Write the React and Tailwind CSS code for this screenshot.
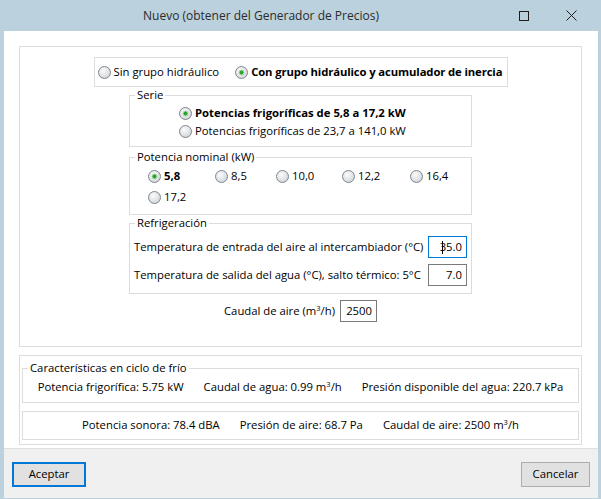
import clsx from "clsx";

/**
 * Diálogo "Nuevo (obtener del Generador de Precios)"
 * Ventana estilo Windows: barra de título, grupos con leyenda y botonera.
 */

const RadioDot = ({ checked }) => (
  <svg width="13" height="13" viewBox="0 0 13 13" className="shrink-0">
    <defs>
      <radialGradient id="rdFill" cx="40%" cy="35%" r="75%">
        <stop offset="0" stopColor="#fbfbfb" />
        <stop offset="1" stopColor="#cdd1d5" />
      </radialGradient>
    </defs>
    <circle cx="6.5" cy="6.5" r="6" fill="url(#rdFill)" stroke="#7e8790" />
    {checked && <circle cx="6.5" cy="6.5" r="2.4" fill="#2da42d" stroke="#a6dca6" strokeWidth="0.8" />}
  </svg>
);

const Radio = ({ checked, label, bold, className, labelClass }) => (
  <label className={clsx("flex items-center", className)}>
    <RadioDot checked={checked} />
    <span className={clsx("ml-[3px] whitespace-nowrap", bold && "font-bold", labelClass)}>{label}</span>
  </label>
);

// Caja de grupo con leyenda (GroupBox)
const GroupBox = ({ legend, className, children }) => (
  <fieldset className={clsx("border border-[#dcdcdc]", className)}>
    <legend className="ml-[5px] px-[2px] leading-[16px]">{legend}</legend>
    {children}
  </fieldset>
);

const NumInput = ({ value, focused, className }) => (
  <div
    className={clsx(
      "flex h-[22px] items-center justify-end border pr-[4px]",
      focused ? "border-[#0078d7]" : "border-[#7a7a7a]",
      className
    )}
  >
    {focused && <span className="-mr-[3px] h-[13px] w-px bg-black" />}
    {value}
  </div>
);

const Sup3 = () => <sup className="text-[7.5px]">3</sup>;

const potencias = [
  { v: "5,8", w: "w-[67px]", checked: true },
  { v: "8,5", w: "w-[61px]" },
  { v: "10,0", w: "w-[66px]" },
  { v: "12,2", w: "w-[68px]" },
  { v: "16,4", w: "w-[60px]" },
  { v: "17,2", w: "w-[67px]" },
];

export default function App() {
  return (
    <div className="flex h-[499px] w-[601px] flex-col bg-[#bcd1de] font-['Open_Sans','Noto_Sans',sans-serif] text-[11.3px] text-black">
      {/* BARRA DE TÍTULO */}
      <div className="flex h-[31px] shrink-0 items-center text-[12px] text-[#2b2b2b]">
        <span className="pl-[143px]">Nuevo (obtener del Generador de Precios)</span>
        <div className="ml-auto mr-[24px] flex items-center gap-[37px]">
          <span className="h-[10px] w-[10px] border border-[#1e1e1e]" />
          <svg width="11" height="11" viewBox="0 0 11 11">
            <path d="M0.5 0.5 L10.5 10.5 M10.5 0.5 L0.5 10.5" stroke="#1e1e1e" strokeWidth="1" />
          </svg>
        </div>
      </div>

      <div className="ml-[4px] mr-[3px] flex flex-1 flex-col">
        {/* ÁREA BLANCA */}
        <div className="flex h-[417px] flex-col bg-white px-[15px] pt-[15px]">
          {/* 1. DATOS DEL EQUIPO */}
          <div className="flex h-[301px] w-[563px] flex-col border border-[#dcdcdc]">
            <div className="mx-auto mt-[10px] flex h-[30px] w-[414px] items-center border border-[#dcdcdc] pl-[3px]">
              <Radio label="Sin grupo hidráulico" />
              <Radio
                className="ml-[16px]"
                labelClass="tracking-[-0.12px]"
                checked
                bold
                label="Con grupo hidráulico y acumulador de inercia"
              />
            </div>

            <GroupBox legend="Serie" className="mx-auto w-[343px] pb-[6px]">
              <div className="pl-[49px] pt-[1px]">
                <Radio className="h-[18px]" checked bold label="Potencias frigoríficas de 5,8 a 17,2 kW" />
                <Radio className="h-[18px]" label="Potencias frigoríficas de 23,7 a 141,0 kW" />
              </div>
            </GroupBox>

            <GroupBox legend="Potencia nominal (kW)" className="mx-auto mt-[2px] w-[343px] pb-[6px]">
              <div className="flex flex-wrap pl-[18px] pt-[1px]">
                {potencias.map((p) => (
                  <Radio key={p.v} className={clsx("h-[21px]", p.w)} checked={p.checked} bold={p.checked} label={p.v} />
                ))}
              </div>
            </GroupBox>

            <GroupBox legend="Refrigeración" className="mx-auto w-[343px] pb-[7px]">
              <div className="mt-[5px] flex flex-col gap-[6px] px-[4px]">
                <div className="flex items-center justify-between">
                  <span>Temperatura de entrada del aire al intercambiador (°C)</span>
                  <NumInput value="35.0" focused className="w-[39px]" />
                </div>
                <div className="flex items-center justify-between">
                  <span>Temperatura de salida del agua (°C), salto térmico: 5°C</span>
                  <NumInput value="7.0" className="w-[39px]" />
                </div>
              </div>
            </GroupBox>

            <div className="mt-[6px] flex items-center justify-center gap-[5px]">
              <span>
                Caudal de aire (m<Sup3 />/h)
              </span>
              <NumInput value="2500" className="w-[37px]" />
            </div>
          </div>

          {/* 2. RESULTADOS */}
          <div className="mt-[8px] flex h-[90px] w-[563px] flex-col border border-[#dcdcdc] px-[2px]">
            <GroupBox legend="Características en ciclo de frío" className="mt-[4px] pb-[5px]">
              <div className="mt-[1px] flex h-[20px] items-center justify-center gap-[20px]">
                <span>Potencia frigorífica: 5.75 kW</span>
                <span>
                  Caudal de agua: 0.99 m<Sup3 />/h
                </span>
                <span>Presión disponible del agua: 220.7 kPa</span>
              </div>
            </GroupBox>
            <div className="mt-[8px] flex h-[29px] items-center justify-center gap-[20px] border border-[#dcdcdc]">
              <span>Potencia sonora: 78.4 dBA</span>
              <span>Presión de aire: 68.7 Pa</span>
              <span>
                Caudal de aire: 2500 m<Sup3 />/h
              </span>
            </div>
          </div>
        </div>

        {/* BOTONERA */}
        <div className="flex h-[50px] items-start justify-between border-t border-[#dfdfdf] bg-[#f0f0f0] px-[8px] pt-[13px]">
          <button className="h-[25px] w-[74px] border-2 border-[#0078d7] bg-[#e1e1e1]">Aceptar</button>
          <button className="h-[25px] w-[69px] border border-[#adadad] bg-[#e1e1e1]">Cancelar</button>
        </div>
        <div className="h-[2px] shrink-0" />
      </div>
    </div>
  );
}
